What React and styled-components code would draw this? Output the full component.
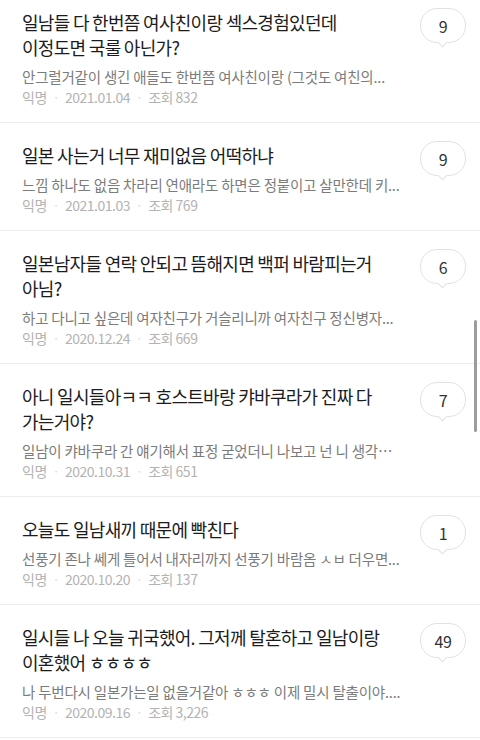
import React from 'react';
import styled, { createGlobalStyle } from 'styled-components';

const GlobalStyle = createGlobalStyle`
    html, body {
        margin: 0;
        padding: 0;
        background: #ffffff;
    }
    body {
        font-family: 'Noto Sans CJK KR', 'Noto Sans', sans-serif;
        overflow: hidden;
    }
`;

const posts = [
    {
        title: '일남들 다 한번쯤 여사친이랑 섹스경험있던데\n이정도면 국룰 아닌가?',
        preview: '안그럴거같이 생긴 애들도 한번쯤 여사친이랑 (그것도 여친의...',
        date: '2021.01.04',
        views: '832',
        comments: 9,
    },
    {
        title: '일본 사는거 너무 재미없음 어떡하냐',
        preview: '느낌 하나도 없음 차라리 연애라도 하면은 정붙이고 살만한데 키...',
        date: '2021.01.03',
        views: '769',
        comments: 9,
    },
    {
        title: '일본남자들 연락 안되고 뜸해지면 백퍼 바람피는거\n아님?',
        preview: '하고 다니고 싶은데 여자친구가 거슬리니까 여자친구 정신병자...',
        date: '2020.12.24',
        views: '669',
        comments: 6,
    },
    {
        title: '아니 일시들아ㅋㅋ 호스트바랑 캬바쿠라가 진짜 다\n가는거야?',
        preview: '일남이 캬바쿠라 간 얘기해서 표정 굳었더니 나보고 넌 니 생각…',
        date: '2020.10.31',
        views: '651',
        comments: 7,
    },
    {
        title: '오늘도 일남새끼 때문에 빡친다',
        preview: '선풍기 존나 쎄게 틀어서 내자리까지 선풍기 바람옴 ㅅㅂ 더우면...',
        date: '2020.10.20',
        views: '137',
        comments: 1,
    },
    {
        title: '일시들 나 오늘 귀국했어. 그저께 탈혼하고 일남이랑\n이혼했어 ㅎㅎㅎㅎ',
        preview: '나 두번다시 일본가는일 없을거같아 ㅎㅎㅎ 이제 밀시 탈출이야....',
        date: '2020.09.16',
        views: '3,226',
        comments: 49,
    },
];

// list is scrolled a little, first item is cut at the top
const List = styled.ul`
    list-style: none;
    margin: -10px 0 0;
    padding: 0;
`;

const Item = styled.li`
    padding: 20px 14px 15px 22px;
    border-bottom: 1px solid #ececec;
`;

const Head = styled.div`
    display: flex;
    align-items: flex-start;
`;

const Title = styled.div`
    flex: 1;
    min-width: 0;
    font-size: 18px;
    line-height: 25px;
    letter-spacing: -0.7px;
    color: #1c1c1c;
    white-space: pre-line;
`;

const Preview = styled.div`
    margin-top: 7px;
    font-size: 14.5px;
    line-height: 20px;
    letter-spacing: -0.2px;
    color: #7b7b7b;
    white-space: nowrap;
    overflow: hidden;
`;

const Meta = styled.div`
    display: flex;
    align-items: center;
    gap: 6px;
    font-size: 14px;
    line-height: 20px;
    letter-spacing: -0.5px;
    color: #b3b3b3;
`;

const Dot = styled.span`
    color: #d6d6d6;
    font-size: 12px;
`;

// the bubble hangs below a one-line title without pushing the preview down
const Bubble = styled.div`
    position: relative;
    flex: none;
    display: flex;
    align-items: center;
    justify-content: center;
    width: 44px;
    height: 33px;
    margin: -2px 0 -12px 20px;
    border: 1px solid #e2e2e2;
    border-radius: 17px;
    background: #fff;
    font-size: 16px;
    color: #333;
    letter-spacing: -0.3px;

    &::after {
        content: '';
        position: absolute;
        left: 18px;
        bottom: -4px;
        width: 6px;
        height: 6px;
        background: #fff;
        border-right: 1px solid #e2e2e2;
        border-bottom: 1px solid #e2e2e2;
        transform: rotate(45deg);
    }
`;

const ScrollThumb = styled.div`
    position: fixed;
    top: 320px;
    right: 3px;
    width: 3px;
    height: 112px;
    border-radius: 2px;
    background: #9c9c9c;
`;

const Post = ({ post }) => (
    <Item>
        <Head>
            <Title>{post.title}</Title>
            <Bubble>{post.comments}</Bubble>
        </Head>
        <Preview>{post.preview}</Preview>
        <Meta>
            <span>익명</span>
            <Dot>·</Dot>
            <span>{post.date}</span>
            <Dot>·</Dot>
            <span>조회 {post.views}</span>
        </Meta>
    </Item>
);

export default function App() {
    return (
        <>
            <GlobalStyle />
            <List>
                {posts.map((post) => (
                    <Post key={post.date} post={post} />
                ))}
            </List>
            <ScrollThumb />
        </>
    );
}
